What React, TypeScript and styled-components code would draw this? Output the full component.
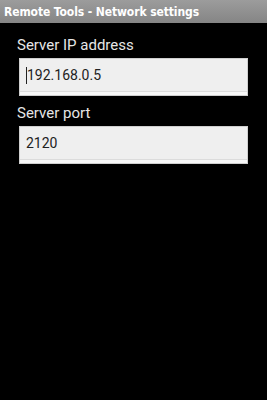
import React from "react";
import styled, { createGlobalStyle } from "styled-components";

const Global = createGlobalStyle`
  html, body { margin: 0; padding: 0; background: #000; }
  body { width: 267px; height: 400px; overflow: hidden; font-family: "Roboto", "DejaVu Sans", sans-serif; }
`;

const Screen = styled.div`
  width: 267px;
  height: 400px;
  background: #000;
  display: flex;
  flex-direction: column;
`;

const TitleBar = styled.div`
  height: 23px;
  background: linear-gradient(#9c9c9c, #858585);
  display: flex;
  align-items: center;
  padding-left: 4px;
  color: #fff;
  font-family: "DejaVu Sans Condensed", "DejaVu Sans", sans-serif;
  font-weight: bold;
  font-size: 12px;
  letter-spacing: -0.1px;
`;

const Form = styled.div`
  display: flex;
  flex-direction: column;
  padding: 13px 19px 0 17px;
`;

const Label = styled.div`
  color: #e6e6e6;
  font-family: "Roboto", sans-serif;
  font-size: 15px;
  line-height: 18px;
  margin-bottom: 4px;
`;

const Field = styled.div`
  margin-left: 2px;
  height: 38px;
  box-sizing: border-box;
  background: #efefef;
  border: 1px solid #cfcfcf;
  box-shadow: inset 0 -3px 0 #f8f8f8, inset 0 -4px 0 #dcdcdc;
  display: flex;
  align-items: center;
  padding: 0 0 4px 6px;
  color: #222;
  font-family: "Roboto", sans-serif;
  font-size: 14px;
  margin-bottom: 8px;
`;

const Cursor = styled.span`
  display: inline-block;
  width: 1px;
  height: 17px;
  background: #222;
`;

export default function App() {
  return (
    <>
      <Global />
      <Screen>
        <TitleBar>Remote Tools - Network settings</TitleBar>
        <Form>
          <Label>Server IP address</Label>
          <Field>
            <Cursor />
            192.168.0.5
          </Field>
          <Label>Server port</Label>
          <Field>2120</Field>
        </Form>
      </Screen>
    </>
  );
}
